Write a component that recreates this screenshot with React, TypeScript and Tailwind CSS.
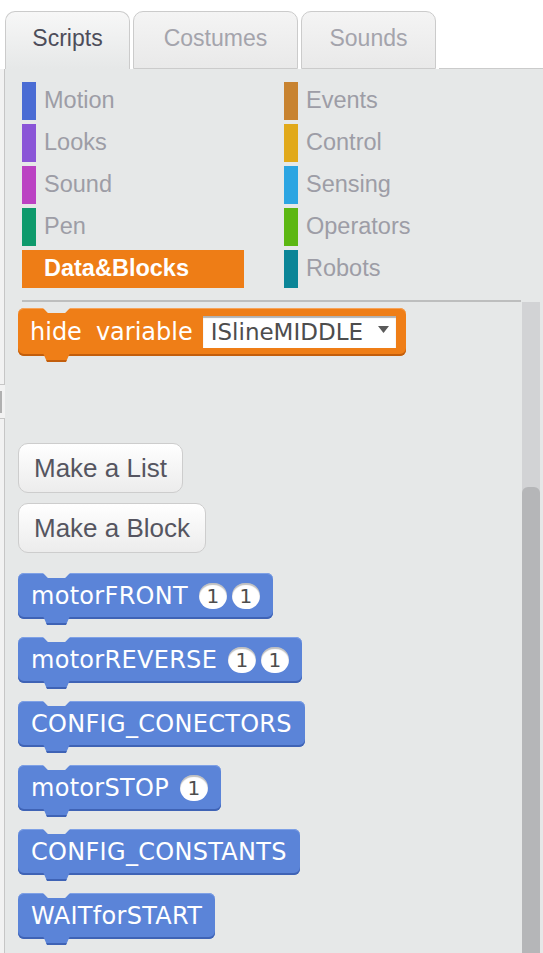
import React from "react";

const categories = [
  { name: "Motion", bar: "bg-[#4a6cd4]" },
  { name: "Events", bar: "bg-[#c88330]" },
  { name: "Looks", bar: "bg-[#8a55d7]" },
  { name: "Control", bar: "bg-[#e1a91a]" },
  { name: "Sound", bar: "bg-[#bb42c3]" },
  { name: "Sensing", bar: "bg-[#2ca5e2]" },
  { name: "Pen", bar: "bg-[#0e9a6c]" },
  { name: "Operators", bar: "bg-[#5cb712]" },
  { name: "Data&Blocks", bar: "bg-[#ee7d16]", active: true },
  { name: "Robots", bar: "bg-[#0b8597]" },
];

const blocks = [
  { label: "motorFRONT", args: 2 },
  { label: "motorREVERSE", args: 2 },
  { label: "CONFIG_CONECTORS", args: 0 },
  { label: "motorSTOP", args: 1 },
  { label: "CONFIG_CONSTANTS", args: 0 },
  { label: "WAITforSTART", args: 0 },
];

const blockFont = { fontFamily: '"DejaVu Sans", Verdana, sans-serif' };

function Notches({ tab }: { tab: string }) {
  return (
    <>
      {/* top notch cut into the block */}
      <span className="absolute left-[25px] top-0 w-[27px] h-[5px] bg-[#e6e8e8] [clip-path:polygon(0_0,100%_0,82%_100%,18%_100%)]" />
      {/* bottom tab */}
      <span className={`absolute left-[25px] bottom-[-6px] w-[27px] h-[9px] ${tab} [clip-path:polygon(0_0,100%_0,85%_100%,15%_100%)]`} />
    </>
  );
}

function NumberSlot() {
  return (
    <span className="flex items-center justify-center w-[28px] h-[26px] rounded-full bg-white shadow-[inset_0_2px_1px_rgba(0,0,0,0.25)] text-[20px] leading-none text-[#4d4d4d]">
      1
    </span>
  );
}

function CustomBlock({ label, args }: { label: string; args: number }) {
  return (
    <div
      className="relative self-start flex items-center h-[46px] px-[13px] rounded-[6px] bg-[#5b84d8] shadow-[inset_0_-2px_0_#3f63b5,inset_0_1px_0_#7fa1e6] text-white text-[24px] tracking-[0.3px]"
      style={blockFont}
    >
      <Notches tab="bg-[#5b84d8] shadow-[inset_0_-2px_0_#3f63b5]" />
      <span className="leading-none">{label}</span>
      {args > 0 && (
        <span className="flex items-center gap-[5px] ml-[11px]">
          {Array.from({ length: args }).map((_, i) => (
            <NumberSlot key={i} />
          ))}
        </span>
      )}
    </div>
  );
}

function HideVariableBlock() {
  return (
    <div
      className="relative self-start flex items-center h-[48px] pl-[12px] pr-[10px] rounded-[6px] bg-[#ef7e17] shadow-[inset_0_-2px_0_#c25e0c,inset_0_1px_0_#f7a256] text-white text-[24px]"
      style={blockFont}
    >
      <Notches tab="bg-[#ef7e17] shadow-[inset_0_-2px_0_#c25e0c]" />
      <span className="leading-none">hide</span>
      <span className="leading-none ml-[14px]">variable</span>
      <span className="flex items-center w-[193px] h-[32px] ml-[10px] pl-[8px] pr-[7px] bg-white shadow-[inset_0_2px_1px_rgba(0,0,0,0.3)] text-[23px] text-[#4d4d4d]">
        <span className="flex-1 leading-none">ISlineMIDDLE</span>
        <svg width="11" height="7" viewBox="0 0 11 7" className="mb-[6px]">
          <polygon points="0,0 11,0 5.5,7" fill="#5a5a5a" />
        </svg>
      </span>
    </div>
  );
}

function PaletteButton({ label }: { label: string }) {
  return (
    <button className="self-start h-[50px] px-[15px] rounded-[10px] border border-[#cdcdcd] bg-gradient-to-b from-[#ffffff] to-[#ececec] text-[26px] text-[#555560] font-['Liberation_Sans',Arial,sans-serif]">
      {label}
    </button>
  );
}

export default function App() {
  return (
    <div className="w-[543px] h-[953px] bg-white overflow-hidden flex flex-col font-['Liberation_Sans',Arial,sans-serif]">
      {/* Tabs */}
      <div className="h-[69px] flex items-end pl-[5px] gap-[3px]">
        <div className="w-[125px] h-[58px] rounded-t-[10px] border border-b-0 border-[#cbcbcb] bg-gradient-to-b from-[#f7f7f7] to-[#e6e8e8] pt-[12px] text-center text-[23px] leading-[28px] text-[#4d4d5a]">
          Scripts
        </div>
        <div className="w-[165px] h-[58px] rounded-t-[10px] border border-[#cbcbcb] bg-gradient-to-b from-[#f4f4f4] to-[#e9e9e9] pt-[12px] text-center text-[23px] leading-[28px] text-[#a4a4ac]">
          Costumes
        </div>
        <div className="w-[135px] h-[58px] rounded-t-[10px] border border-[#cbcbcb] bg-gradient-to-b from-[#f4f4f4] to-[#e9e9e9] pt-[12px] text-center text-[23px] leading-[28px] text-[#a4a4ac]">
          Sounds
        </div>
        <div className="flex-1 h-px bg-[#cbcbcb]" />
      </div>

      {/* Panel */}
      <div className="flex-1 flex bg-[#e6e8e8]">
        {/* left edge */}
        <div className="w-[5px] flex flex-col bg-[#f2f2f2]">
          <div className="h-[316px] border-r border-b border-[#c6c6c6]" />
          <div className="h-[33px] flex items-center">
            <div className="w-[2px] h-[22px] bg-[#b0b0b0]" />
          </div>
          <div className="flex-1 border-r border-t border-[#c6c6c6]" />
        </div>

        <div className="flex-1 flex flex-col">
          {/* Categories */}
          <div className="pt-[13px] pl-[17px] grid grid-cols-[222px_auto] gap-x-[40px] gap-y-[4px]">
            {categories.map((c) =>
              c.active ? (
                <div
                  key={c.name}
                  className="h-[38px] flex items-center pl-[22px] bg-[#ee7d16] text-white font-bold text-[23.5px]"
                >
                  {c.name}
                </div>
              ) : (
                <div key={c.name} className="h-[38px] flex items-center gap-[8px]">
                  <span className={`w-[14px] h-[38px] ${c.bar}`} />
                  <span className="text-[23.5px] text-[#9d9da6]">{c.name}</span>
                </div>
              )
            )}
          </div>

          <div className="mt-[12px] ml-[17px] mr-[22px] h-[2px] bg-[#bdbebe]" />

          {/* Palette */}
          <div className="flex-1 flex">
            <div className="flex-1 flex flex-col pt-[6px] pl-[13px]">
              <HideVariableBlock />
              <div className="mt-[87px] flex flex-col gap-[10px]">
                <PaletteButton label="Make a List" />
                <PaletteButton label="Make a Block" />
              </div>
              <div className="mt-[20px] flex flex-col gap-[18px]">
                {blocks.map((b) => (
                  <CustomBlock key={b.label} label={b.label} args={b.args} />
                ))}
              </div>
            </div>
            <div className="w-[18px] flex flex-col pt-[185px] bg-[#d2d3d5]">
              <div className="flex-1 rounded-t-[6px] bg-[#b5b6b8]" />
            </div>
            <div className="w-[3px]" />
          </div>
        </div>
      </div>
    </div>
  );
}
